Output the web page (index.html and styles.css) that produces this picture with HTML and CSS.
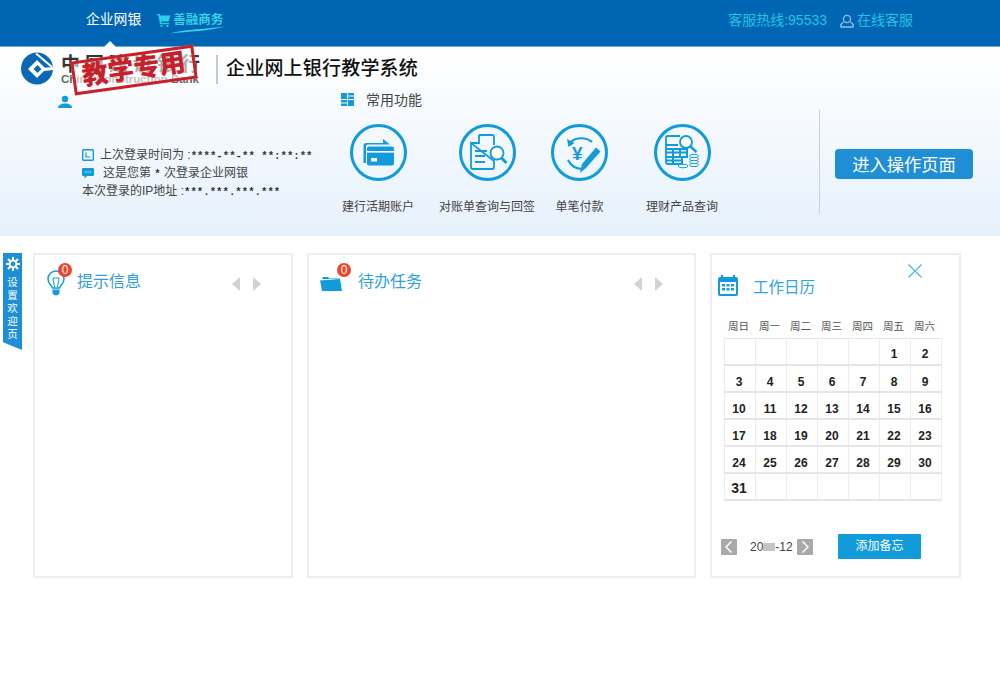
FILE: index.html
```html
<!DOCTYPE html>
<html lang="zh-CN">
<head>
<meta charset="utf-8">
<title>企业网上银行教学系统</title>
<link rel="stylesheet" href="styles.css">
</head>
<body>
<header class="topbar">
  <nav class="nav">
    <a class="nav-item">企业网银</a>
    <a class="nav-shop">
      <svg class="cart" viewBox="0 0 13 13"><path d="M0 0h2.800l.5 1.500H13v1.500l-1.500 4.500H4.200L4.500 9H12v1.300H3L1.400 1.300H0z" fill="#27d2e6"/><circle cx="4.500" cy="12" r="1.100" fill="#27d2e6"/><circle cx="10.500" cy="12" r="1.100" fill="#27d2e6"/></svg>
      <span class="shop-text">善融商务</span>
      <svg class="swoosh" viewBox="0 0 56 8"><path d="M0 7.500C18 3 38 3 56 .5 40 5 20 5.500 0 7.500z" fill="#3fd0e8"/></svg>
    </a>
  </nav>
  <div class="service">
    <span>客服热线:95533</span>
    <svg class="agent" viewBox="0 0 14 14"><circle cx="7" cy="5" r="3.600" fill="none" stroke="#8cc0e8" stroke-width="1.400"/><path d="M3.500 8C1 9.500.5 11 1 13h12c.5-2 0-3.500-2.500-5" fill="none" stroke="#8cc0e8" stroke-width="1.400"/></svg>
    <span>在线客服</span>
  </div>
</header>

<section class="hero">
  <div class="brand">
    <svg class="logo" viewBox="0 0 32 33"><circle cx="16" cy="16.500" r="16" fill="#0b68b4"/><path d="M15 1.500L31 15" stroke="#fff" stroke-width="2"/><path d="M16 8l9 9-9 9-9-9z" fill="#fff"/><path d="M16.500 13l4 4-4 4-4-4z" fill="#0b68b4"/><path d="M21 16l11-1v3l-8.500 1z" fill="#fff"/></svg>
    <div class="bank-name">
      <span class="bank-cn">中国建设银行</span>
      <span class="bank-en">China Construction Bank</span>
    </div>
    <h1 class="sys-title">企业网上银行教学系统</h1>
    <div class="stamp">教学专用</div>
  </div>

  <div class="hero-body">
    <div class="user-col">
      <svg class="user-icon" viewBox="0 0 14 14"><circle cx="7" cy="4" r="3.200" fill="#129bdb"/><path d="M0 13c0-3 3-4.500 7-4.500s7 1.500 7 4.500z" fill="#129bdb"/></svg>
      <ul class="login-info">
        <li class="info-row">
          <svg class="info-icon" viewBox="0 0 12 12"><rect x=".7" y=".7" width="10.600" height="10.600" rx="1" fill="none" stroke="#129bdb" stroke-width="1.400"/><path d="M4 3.500V8h4" fill="none" stroke="#129bdb" stroke-width="1.200"/></svg>
          <span>上次登录时间为 :<b class="mask">****-**-** **:**:**</b></span>
        </li>
        <li class="info-row info-second">
          <svg class="info-icon" viewBox="0 0 12 12"><path d="M1 1h10a1 1 0 0 1 1 1v6a1 1 0 0 1-1 1H5l-2.500 2.500V9H1a1 1 0 0 1-1-1V2a1 1 0 0 1 1-1z" fill="#129bdb"/><path d="M3 5h1.200M5.400 5h1.200M7.800 5H9" stroke="#fff" stroke-width="1.200"/></svg>
          <span>这是您第 <b class="mask">*</b> 次登录企业网银</span>
        </li>
        <li class="info-row">
          <span>本次登录的IP地址 :<b class="mask">***.***.***.***</b></span>
        </li>
      </ul>
    </div>

    <div class="common">
      <div class="common-head">
        <svg class="grid-icon" viewBox="0 0 13 13"><path d="M0 0h6v6H0zM7 0h6v2.600H7zM7 3.600h6V6H7zM0 7h6v2.500H0zM0 10.500h6V13H0zM7 7h6v6H7z" fill="#129bdb"/></svg>
        <span>常用功能</span>
      </div>
      <div class="shortcuts">
        <a class="shortcut">
          <span class="circle">
            <svg viewBox="0 0 56 56"><path d="M13.500 38V21a3 3 0 0 1 3-3H33v-4l7 5.500H18a2 2 0 0 0-2 2V38z" fill="#129bdb"/><rect x="17" y="21.500" width="27" height="19" rx="2" fill="#129bdb"/><rect x="17" y="26" width="27" height="1.600" fill="#fff"/><rect x="21" y="33" width="6" height="3.500" fill="#fff"/></svg>
          </span>
          <span class="shortcut-label">建行活期账户</span>
        </a>
        <a class="shortcut gap-b">
          <span class="circle">
            <svg viewBox="0 0 56 56"><path d="M20 10h13a2 2 0 0 1 2 2v8M35 36v6a2 2 0 0 1-2 2H14a2 2 0 0 1-2-2V18z" fill="none" stroke="#129bdb" stroke-width="1.800"/><path d="M20 10v8h-8" fill="none" stroke="#129bdb" stroke-width="1.800"/><path d="M16 26h12M16 31h10M16 37h10" stroke="#129bdb" stroke-width="1.800"/><circle cx="38" cy="28" r="6.500" fill="#fff" stroke="#129bdb" stroke-width="1.800"/><path d="M42.500 33l5 5" stroke="#129bdb" stroke-width="3"/></svg>
          </span>
          <span class="shortcut-label">对账单查询与回签</span>
        </a>
        <a class="shortcut gap-c">
          <span class="circle">
            <svg viewBox="0 0 56 56"><path d="M19 17c5-5 15-5 21 0" fill="none" stroke="#129bdb" stroke-width="2.200"/><path d="M15 14l1.500 8 6-4z" fill="#129bdb"/><path d="M16 35c3 6 9 9 15 9" fill="none" stroke="#129bdb" stroke-width="2.200"/><text class="yen" x="20" y="35">¥</text><path d="M30 39l14-16.500 4.500 4L34 43l-6 5z" fill="#129bdb"/></svg>
          </span>
          <span class="shortcut-label">单笔付款</span>
        </a>
        <a class="shortcut gap-d">
          <span class="circle">
            <svg viewBox="0 0 56 56"><path d="M26 11H14a2 2 0 0 0-2 2v24a2 2 0 0 0 2 2h14" fill="none" stroke="#129bdb" stroke-width="1.800"/><path d="M12 20h12M19 24h14v8h-5v7h-9zM12 24h7M12 32h16M19 24v15M26 24v8M12 27.500h21M12 35.500h16" fill="none" stroke="#129bdb" stroke-width="2"/><circle cx="32" cy="17" r="6" fill="#fff" stroke="#129bdb" stroke-width="1.800"/><path d="M36.500 21.500l6 5.500" stroke="#129bdb" stroke-width="2.400"/><ellipse cx="40" cy="31" rx="4.500" ry="1.700" fill="#fff" stroke="#129bdb"/><ellipse cx="40" cy="34" rx="4.500" ry="1.700" fill="#fff" stroke="#129bdb"/><ellipse cx="40" cy="37" rx="4.500" ry="1.700" fill="#fff" stroke="#129bdb"/><ellipse cx="40" cy="40" rx="4.500" ry="1.700" fill="#fff" stroke="#129bdb"/><ellipse cx="29" cy="41" rx="5" ry="1.800" fill="#fff" stroke="#129bdb"/></svg>
          </span>
          <span class="shortcut-label">理财产品查询</span>
        </a>
      </div>
    </div>

    <div class="enter-wrap">
      <button class="enter-btn">进入操作页面</button>
    </div>
  </div>
</section>

<main class="main">
  <aside class="side-tab">
    <svg class="gear" viewBox="0 0 14 14"><circle cx="7" cy="7" r="3.400" fill="none" stroke="#fff" stroke-width="2"/><path d="M7 0v3M7 11v3M0 7h3M11 7h3M2 2l2.200 2.200M9.800 9.800L12 12M12 2L9.800 4.200M4.200 9.800L2 12" stroke="#fff" stroke-width="2"/></svg>
    <span>设</span><span>置</span><span>欢</span><span>迎</span><span>页</span>
  </aside>

  <section class="panel panel-tips">
    <div class="panel-head">
      <span class="head-icon">
        <svg class="bulb" viewBox="0 0 18 26"><path d="M5.500 18C4.500 15 1 13.500 1 9a8 8 0 0 1 16 0c0 4.500-3.500 6-4.500 9z" fill="none" stroke="#129bdb" stroke-width="1.500"/><path d="M6 8h6l-1.500 9M6 8l1.500 9" fill="none" stroke="#129bdb" stroke-width="1"/><path d="M5.500 19.500h7v4l-2 1.800h-3l-2-1.800z" fill="#129bdb"/></svg>
        <b class="badge">0</b>
      </span>
      <h2 class="panel-title">提示信息</h2>
      <div class="arrows"><i class="arrow arrow-left"></i><i class="arrow arrow-right"></i></div>
    </div>
  </section>

  <section class="panel panel-tasks">
    <div class="panel-head">
      <span class="head-icon">
        <svg class="folder" viewBox="0 0 22 16"><path d="M3 2h5l1.500 1.500H20V4H2z" fill="#129bdb"/><path d="M0 5.500L20 4l2 12H2z" fill="#129bdb"/></svg>
        <b class="badge">0</b>
      </span>
      <h2 class="panel-title">待办任务</h2>
      <div class="arrows"><i class="arrow arrow-left"></i><i class="arrow arrow-right"></i></div>
    </div>
  </section>

  <section class="panel panel-cal">
    <div class="cal-head">
      <svg class="cal-icon" viewBox="0 0 20 21"><rect y="2" width="20" height="19" rx="2" fill="#129bdb"/><rect x="2" y="7" width="16" height="12" fill="#fff"/><path d="M4 0v5M16 0v5" stroke="#129bdb" stroke-width="2"/><path d="M4 9h3v2.500H4zM8.500 9h3v2.500h-3zM13 9h3v2.500h-3zM4 13h3v2.500H4zM8.500 13h3v2.500h-3zM13 13h3v2.500h-3z" fill="#129bdb"/></svg>
      <h2 class="cal-title">工作日历</h2>
      <svg class="close" viewBox="0 0 14 14"><path d="M.5.500l13 13M13.500.5l-13 13" stroke="#46b4e6" stroke-width="1.100"/></svg>
    </div>
    <table class="cal">
      <thead>
        <tr><th>周日</th><th>周一</th><th>周二</th><th>周三</th><th>周四</th><th>周五</th><th>周六</th></tr>
      </thead>
      <tbody>
        <tr><td></td><td></td><td></td><td></td><td></td><td>1</td><td>2</td></tr>
        <tr><td>3</td><td>4</td><td>5</td><td>6</td><td>7</td><td>8</td><td>9</td></tr>
        <tr><td>10</td><td>11</td><td>12</td><td>13</td><td>14</td><td>15</td><td>16</td></tr>
        <tr><td>17</td><td>18</td><td>19</td><td>20</td><td>21</td><td>22</td><td>23</td></tr>
        <tr><td>24</td><td>25</td><td>26</td><td>27</td><td>28</td><td>29</td><td>30</td></tr>
        <tr><td class="big">31</td><td></td><td></td><td></td><td></td><td></td><td></td></tr>
      </tbody>
    </table>
    <div class="cal-foot">
      <button class="month-btn"><svg viewBox="0 0 16 16"><path d="M10.500 2.500L5 8l5.500 5.500" fill="none" stroke="#fff" stroke-width="1.500"/></svg></button>
      <span class="month">20<i class="month-mask"></i>-12</span>
      <button class="month-btn"><svg viewBox="0 0 16 16"><path d="M5.500 2.500L11 8l-5.500 5.500" fill="none" stroke="#fff" stroke-width="1.500"/></svg></button>
      <button class="add-btn">添加备忘</button>
    </div>
  </section>
</main>
</body>
</html>
```
FILE: styles.css
```css
* { box-sizing: border-box; }
html, body { margin: 0; padding: 0; }
body {
  width: 1000px;
  height: 690px;
  overflow: hidden;
  background: #fff;
  color: #333;
  font-family: "Liberation Sans", "Noto Sans CJK SC", sans-serif;
  font-size: 12px;
}
h1, h2, ul { margin: 0; padding: 0; font-weight: normal; }
ul { list-style: none; }

/* top bar */
.topbar {
  height: 47px;
  display: flex;
  align-items: center;
  justify-content: space-between;
  padding: 0 87px 6px 86px;
  background: #0066b3;
  border-bottom: 1px solid #6fa9dc;
}
.nav { display: flex; align-items: center; gap: 16px; }
.nav-item { position: relative; color: #fff; font-size: 13.800px; line-height: 20px; }
.nav-item::after {
  content: "";
  position: absolute;
  left: 18px;
  bottom: -17px;
  border: 6px solid transparent;
  border-top: 0;
  border-bottom-color: #fff;
}
.nav-shop { position: relative; display: flex; align-items: center; gap: 3px; }
.cart { width: 13px; height: 13px; }
.shop-text { color: #35d3e8; font-size: 12.500px; font-weight: bold; line-height: 16px; }
.swoosh { position: absolute; left: 12px; top: 14px; width: 56px; height: 8px; }
.service { display: flex; align-items: center; color: #22c3e3; font-size: 14px; line-height: 20px; }
.agent { width: 14px; height: 14px; margin: 2px 3px 0 13px; }

/* hero */
.hero {
  height: 189px;
  background: linear-gradient(#fff, #e6f1fb);
}
.brand {
  position: relative;
  display: flex;
  align-items: center;
  height: 44px;
  padding-left: 21px;
}
.logo { width: 32px; height: 33px; margin-top: -1px; }
.bank-name { width: 157px; margin-left: 8px; padding-right: 10px; border-right: 2px solid #c8c8c8; display: flex; flex-direction: column; height: 29px; margin-top: 1px; }
.bank-cn { color: #333; font-size: 19px; font-weight: bold; line-height: 18px; white-space: nowrap; letter-spacing: 5px; margin-top: 1px; }
.bank-en { color: #666; font-size: 11.500px; line-height: 11px; font-weight: bold; white-space: nowrap; }
.sys-title { margin: -1px 0 0 8px; color: #111; font-size: 19px; line-height: 26px; font-weight: 500; letter-spacing: .2px; white-space: nowrap; }
.stamp {
  position: absolute;
  z-index: 1;
  left: 72px;
  top: 6px;
  width: 124px;
  height: 34px;
  transform: rotate(-8deg);
  border: 3px solid #c8202a;
  background: rgba(255, 255, 255, .6);
  color: #c8202a;
  font-size: 26px;
  line-height: 27px;
  font-weight: 900;
  text-align: center;
  white-space: nowrap;
}

.hero-body { display: flex; }
.user-col { width: 284px; margin-left: 58px; padding-top: 4px; }
.user-icon { display: block; width: 14px; height: 14px; }
.login-info { margin: 37px 0 0 24px; color: #444; line-height: 18px; }
.info-row { display: flex; align-items: center; height: 18px; white-space: nowrap; }
.info-second span { margin-left: 3px; }
.info-icon { width: 12px; height: 12px; margin-right: 6px; }
.mask { font-family: "Liberation Mono", monospace; font-weight: bold; font-size: 10.700px; color: #333; }

.common { width: 477px; }
.common-head { display: flex; align-items: center; height: 16px; margin-left: -1px; color: #444; font-size: 14px; }
.grid-icon { width: 13px; height: 13px; margin-right: 12px; }
.shortcuts { display: flex; margin-top: 17px; }
.shortcut { display: flex; flex-direction: column; align-items: center; }
.gap-b { margin-left: 25px; }
.gap-c { margin-left: 16px; }
.gap-d { margin-left: 38px; }
.circle { width: 57px; height: 57px; border: 3px solid #129bdb; border-radius: 50%; display: flex; align-items: center; justify-content: center; }
.circle svg { width: 56px; height: 56px; flex: none; }
.yen { fill: #129bdb; font-size: 19px; font-weight: bold; font-family: "Liberation Sans", sans-serif; }
.shortcut-label { margin-top: 17px; color: #444; line-height: 18px; white-space: nowrap; }
.enter-wrap { width: 181px; height: 104px; margin-top: 19px; padding: 39px 0 0 15px; border-left: 1px solid #c9cfd4; }
.enter-btn {
  display: block;
  width: 138px;
  height: 30px;
  padding: 2px 0 0;
  border: 0;
  border-radius: 4px;
  background: #1e8fd5;
  color: #fff;
  font: 17.300px/28px "Liberation Sans", "Noto Sans CJK SC", sans-serif;
}

/* main */
.main { display: flex; align-items: flex-start; padding: 17px 0 0 3px; }
.side-tab {
  width: 19px;
  height: 97px;
  margin-right: 11px;
  padding-top: 4px;
  display: flex;
  flex-direction: column;
  align-items: center;
  background: #1e8fd5;
  clip-path: polygon(0 0, 100% 0, 100% 100%, 0 92%);
  color: #fff;
  font-size: 10.500px;
  line-height: 13px;
}
.gear { width: 14px; height: 14px; margin-bottom: 5px; flex: none; }
.panel { height: 325px; border: 2px solid #eeeeee; background: #fff; }
.panel-tips { width: 260px; }
.panel-tasks { width: 389px; margin-left: 14px; }
.panel-cal { width: 251px; margin-left: 14px; padding: 0 12px 0 6px; }
.panel-head { display: flex; align-items: center; height: 54px; padding-left: 11px; }
.head-icon { position: relative; display: flex; align-items: flex-end; width: 30px; height: 42px; margin-bottom: 14px; }
.panel-tips .panel-head { padding-left: 12px; }
.bulb { width: 18px; height: 26px; }
.panel-tasks .head-icon { width: 38px; }
.folder { width: 22px; height: 16px; margin-bottom: 5px; }
.badge {
  position: absolute;
  left: 11px;
  top: 9px;
  width: 14px;
  height: 14px;
  border-radius: 50%;
  background: #f0452d;
  color: #fff;
  font-size: 12px;
  line-height: 14px;
  font-weight: normal;
  text-align: center;
}
.panel-tasks .badge { left: 17px; }
.panel-title { color: #2f9fdc; font-size: 16px; line-height: 22px; margin-top: -1px; white-space: nowrap; }
.arrows { display: flex; gap: 12.500px; margin-left: 91px; margin-top: 3px; }
.panel-tasks .arrows { margin-left: 212px; }
.arrow { width: 0; height: 0; border: 7px solid transparent; border-left-width: 8.500px; border-right-width: 8.500px; }
.arrow-left { border-left: 0; border-right-color: #d2d2d2; }
.arrow-right { border-right: 0; border-left-color: #d2d2d2; }

.cal-head { position: relative; display: flex; align-items: center; height: 56px; padding-top: 9px; }
.cal-icon { width: 20px; height: 21px; margin-top: -5px; }
.cal-title { margin-left: 15px; color: #2fa6e2; font-size: 15.500px; line-height: 22px; }
.close { position: absolute; right: 25px; top: 9px; width: 14px; height: 14px; }
.cal { margin: 0 0 0 6px; border-collapse: collapse; table-layout: fixed; width: 217px; }
.cal th { height: 27px; width: 31px; padding: 4px 3px 0 0; color: #555; font-size: 10.500px; font-weight: normal; line-height: 14px; }
.cal td { height: 27px; padding: 6px 2px 0 0; text-align: center; color: #222; font-size: 12px; font-weight: bold; border: 1px solid #ededed; border-top-color: #e6e6e6; border-bottom: 2px solid #e6e6e6; }
.cal td.big { font-size: 14px; padding-top: 2px; }
.cal-foot { display: flex; align-items: center; height: 25px; margin: 33px 0 0 3px; }
.month-btn { display: block; width: 16px; height: 16px; padding: 0; border: 0; border-radius: 1px; background: #a9a9a9; }
.month-btn svg { display: block; width: 16px; height: 16px; }
.month { width: 44px; margin-left: 13px; margin-right: 3px; color: #444; white-space: nowrap; }
.month-mask { display: inline-block; width: 12px; height: 8px; background: #c4c4c4; }
.add-btn { width: 83px; height: 25px; margin-left: 25px; padding: 0; border: 0; border-radius: 1px; background: #129bdb; color: #fff; font: 12px/25px "Liberation Sans", "Noto Sans CJK SC", sans-serif; }
```
